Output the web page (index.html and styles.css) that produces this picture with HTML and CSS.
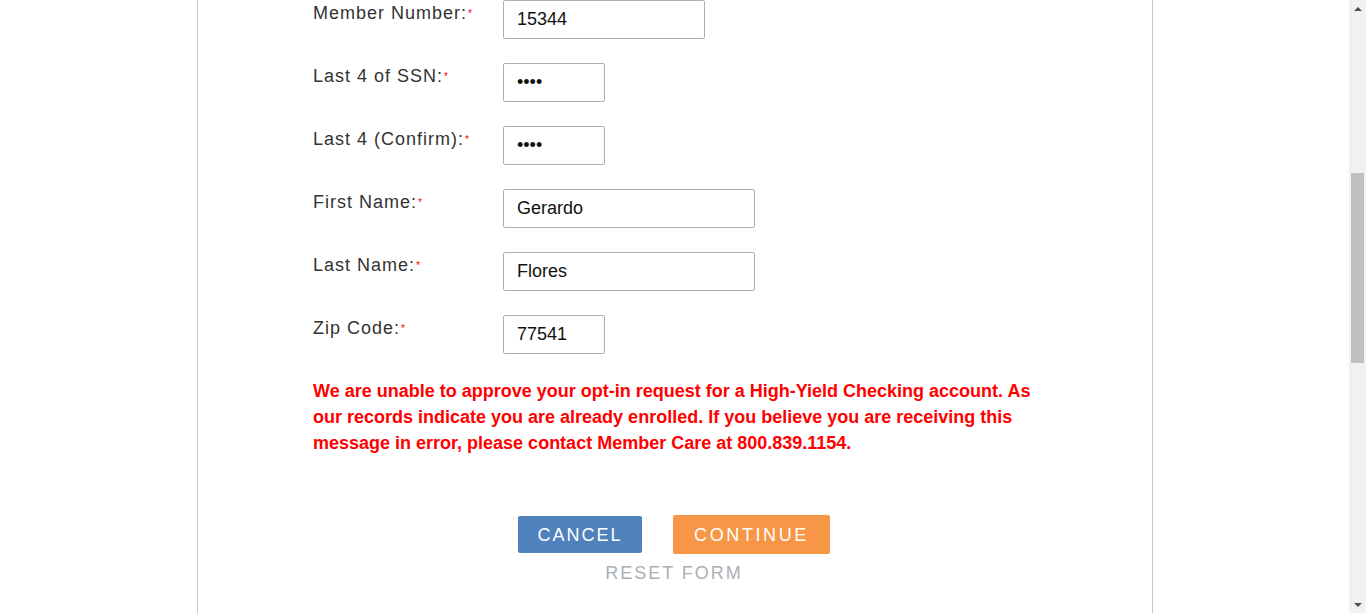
FILE: index.html
```html
<!DOCTYPE html>
<html lang="en">
<head>
<meta charset="utf-8">
<title>High-Yield Checking Opt-In</title>
<link rel="stylesheet" href="styles.css">
</head>
<body>
<div class="viewport">
  <main class="page">
    <div class="panel">
      <form class="form">
        <div class="row">
          <label class="label">Member Number:<span class="req">*</span></label>
          <input class="field w-md" type="text" value="15344">
        </div>
        <div class="row">
          <label class="label">Last 4 of SSN:<span class="req">*</span></label>
          <input class="field w-sm" type="password" value="1234">
        </div>
        <div class="row">
          <label class="label">Last 4 (Confirm):<span class="req">*</span></label>
          <input class="field w-sm" type="password" value="1234">
        </div>
        <div class="row">
          <label class="label">First Name:<span class="req">*</span></label>
          <input class="field w-lg" type="text" value="Gerardo">
        </div>
        <div class="row">
          <label class="label">Last Name:<span class="req">*</span></label>
          <input class="field w-lg" type="text" value="Flores">
        </div>
        <div class="row">
          <label class="label">Zip Code:<span class="req">*</span></label>
          <input class="field w-sm" type="text" value="77541">
        </div>
        <p class="error">We are unable to approve your opt-in request for a High-Yield Checking account. As our records indicate you are already enrolled. If you believe you are receiving this message in error, please contact Member Care at 800.839.1154.</p>
        <div class="actions">
          <button type="button" class="btn btn-cancel">Cancel</button>
          <button type="button" class="btn btn-continue">Continue</button>
        </div>
        <a class="reset" href="#">Reset Form</a>
      </form>
    </div>
  </main>
  <div class="scrollbar">
    <div class="sb-btn"><span class="tri-up"></span></div>
    <div class="sb-track"><div class="sb-thumb"></div></div>
    <div class="sb-btn"><span class="tri-down"></span></div>
  </div>
</div>
</body>
</html>
```

FILE: styles.css
```css
html, body {
  margin: 0;
  padding: 0;
  height: 100%;
  overflow: hidden;
  background: #fff;
  font-family: "Liberation Sans", Arial, sans-serif;
}

.viewport {
  display: flex;
  height: 100%;
}

.page {
  flex: 1;
  display: flex;
  justify-content: center;
  min-width: 0;
}

.panel {
  width: 956px;
  box-sizing: border-box;
  margin-left: 1px;
  border-left: 1px solid #c6c6c6;
  border-right: 1px solid #c6c6c6;
  padding-left: 115px;
}

.form {
  display: flex;
  flex-direction: column;
  align-items: flex-start;
  width: 722px;
}

.row {
  display: flex;
  align-items: flex-start;
  margin-bottom: 24px;
}

.label {
  width: 190px;
  padding-top: 3px;
  font-size: 18px;
  line-height: 21px;
  letter-spacing: 1px;
  color: #333;
}

.req {
  color: #ff0000;
  font-size: 10px;
  letter-spacing: 0;
  vertical-align: 2px;
  margin-left: 1px;
}

.field {
  box-sizing: border-box;
  height: 39px;
  padding: 0 13px;
  border: 1px solid #aab0b6;
  border-radius: 2px;
  font-family: "Liberation Sans", Arial, sans-serif;
  font-size: 18px;
  color: #111;
  background: #fff;
  outline: none;
}

.w-sm { width: 102px; }
.w-md { width: 202px; }
.w-lg { width: 252px; }

.error {
  margin: 0;
  width: 722px;
  font-size: 18px;
  line-height: 26px;
  font-weight: bold;
  color: #ff0000;
}

.actions {
  align-self: center;
  display: flex;
  align-items: center;
  gap: 31px;
  margin-top: 59px;
}

.btn {
  border: none;
  border-radius: 2px;
  padding: 1px 0 0;
  color: #fff;
  font-family: "Liberation Sans", Arial, sans-serif;
  font-size: 18px;
  letter-spacing: 2px;
  text-transform: uppercase;
  cursor: pointer;
}

.btn-cancel {
  width: 124px;
  height: 37px;
  background: #4f81bd;
}

.btn-continue {
  width: 157px;
  height: 39px;
  letter-spacing: 2.6px;
  background: #f79646;
}

.reset {
  align-self: center;
  margin-top: 9px;
  font-size: 18px;
  line-height: 21px;
  letter-spacing: 2px;
  text-transform: uppercase;
  color: #aab0b6;
  text-decoration: none;
}

.scrollbar {
  width: 17px;
  flex: none;
  background: #f1f1f1;
  display: flex;
  flex-direction: column;
}

.sb-btn {
  height: 17px;
  display: flex;
  align-items: center;
  justify-content: center;
}

.sb-track {
  flex: 1;
  padding-top: 156px;
  display: flex;
  flex-direction: column;
  align-items: center;
}

.sb-thumb {
  width: 13px;
  height: 190px;
  background: #c1c1c1;
}

.tri-up {
  width: 0;
  height: 0;
  border-left: 4px solid transparent;
  border-right: 4px solid transparent;
  border-bottom: 4px solid #505050;
}

.tri-down {
  width: 0;
  height: 0;
  border-left: 4px solid transparent;
  border-right: 4px solid transparent;
  border-top: 4px solid #505050;
}
```
